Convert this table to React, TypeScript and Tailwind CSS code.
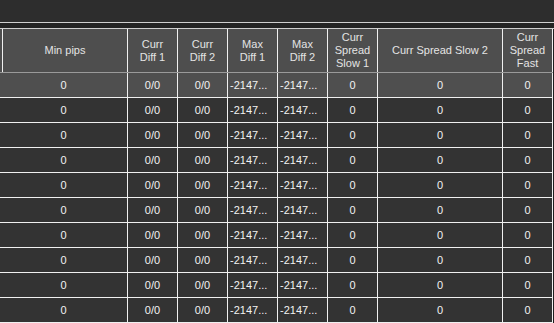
const columns = [
  { key: "minPips", label: ["Min pips"], width: "w-[128px]" },
  { key: "currDiff1", label: ["Curr", "Diff 1"], width: "w-[50px]" },
  { key: "currDiff2", label: ["Curr", "Diff 2"], width: "w-[50px]" },
  { key: "maxDiff1", label: ["Max", "Diff 1"], width: "w-[50px]" },
  { key: "maxDiff2", label: ["Max", "Diff 2"], width: "w-[50px]" },
  { key: "spreadSlow1", label: ["Curr", "Spread", "Slow 1"], width: "w-[50px]" },
  { key: "spreadSlow2", label: ["Curr Spread Slow 2"], width: "w-[125px]" },
  { key: "spreadFast", label: ["Curr", "Spread", "Fast"], width: "w-[50px]" },
];

const row = {
  minPips: "0",
  currDiff1: "0/0",
  currDiff2: "0/0",
  maxDiff1: "-2147...",
  maxDiff2: "-2147...",
  spreadSlow1: "0",
  spreadSlow2: "0",
  spreadFast: "0",
};

const rows = Array.from({ length: 10 }, () => row);

export default function App() {
  return (
    <div
      className="h-[323px] w-[554px] overflow-hidden bg-[#1e1e1e] text-[11px] leading-[13px]"
      style={{ fontFamily: '"Liberation Sans", Arial, sans-serif' }}
    >
      <div className="h-[22px] bg-[#2d2d2d]" />
      <div className="h-[7px] border-y border-[#cfcfcf] bg-[#232323]" />

      {/* header */}
      <div className="flex h-[44px] w-[553px] border-b border-[#9a9a9a] bg-[#4e4e4e] text-[#e4e4e4]">
        <div className="w-[2px]" />
        <div className="flex w-[126px] items-center justify-center border-x border-[#f0f0f0]">Min pips</div>
        {columns.slice(1).map((col) => (
          <div
            key={col.key}
            className={`${col.width} flex flex-col items-center justify-center border-r border-[#f0f0f0] text-center`}
          >
            {col.label.map((line) => (
              <span key={line}>{line}</span>
            ))}
          </div>
        ))}
      </div>

      {/* rows */}
      {rows.map((r, i) => (
        <div
          key={i}
          className={`flex h-[25px] w-[553px] border-b border-[#f0f0f0] text-[#f2f2f2] ${i === 0 ? "bg-[#4f4f4f]" : "bg-[#333333]"}`}
        >
          {columns.map((col) => {
            const value = r[col.key as keyof typeof row];
            const isTrunc = value.endsWith("...");
            return (
              <div
                key={col.key}
                className={`${col.width} flex items-center border-r border-[#f0f0f0] ${isTrunc ? "justify-start pl-[2px]" : "justify-center"}`}
              >
                {value}
              </div>
            );
          })}
        </div>
      ))}
    </div>
  );
}
